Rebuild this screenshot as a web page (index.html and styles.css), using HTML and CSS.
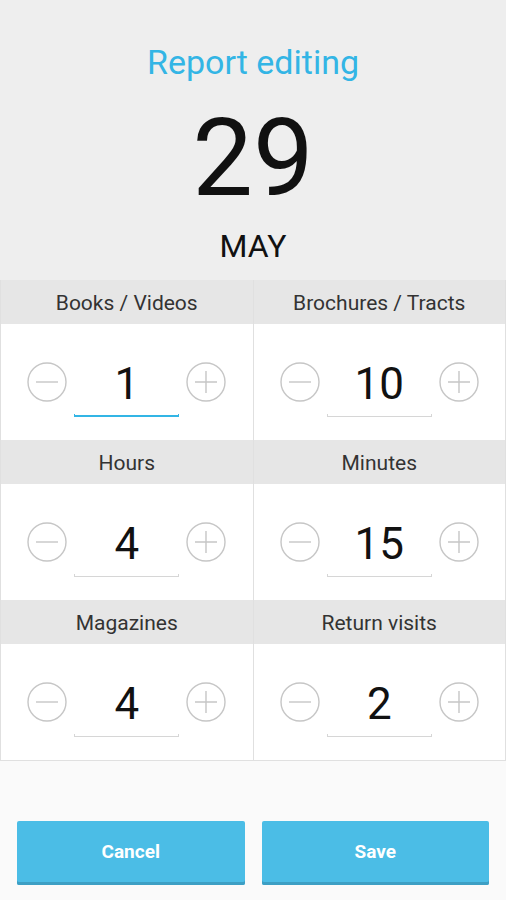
FILE: index.html
```html
<!DOCTYPE html>
<html lang="en">
<head>
    <meta charset="UTF-8">
    <meta name="viewport" content="width=device-width, initial-scale=1.0">
    <title>Report editing</title>
    <link rel="stylesheet" href="styles.css">
</head>
<body>
    <div class="header">
        <div class="title">Report editing</div>
        <div class="day">29</div>
        <div class="month">MAY</div>
    </div>

    <div class="grid">
        <div class="cell">
            <div class="label">Books / Videos</div>
            <div class="counter">
                <button class="round"><svg viewBox="0 0 40 40"><circle cx="20" cy="20" r="19"/><path d="M9 20h22"/></svg></button>
                <div class="field focused"><span class="num">1</span><span class="line"></span></div>
                <button class="round"><svg viewBox="0 0 40 40"><circle cx="20" cy="20" r="19"/><path d="M9 20h22M20 9v22"/></svg></button>
            </div>
        </div>
        <div class="cell">
            <div class="label">Brochures / Tracts</div>
            <div class="counter">
                <button class="round"><svg viewBox="0 0 40 40"><circle cx="20" cy="20" r="19"/><path d="M9 20h22"/></svg></button>
                <div class="field"><span class="num">10</span><span class="line"></span></div>
                <button class="round"><svg viewBox="0 0 40 40"><circle cx="20" cy="20" r="19"/><path d="M9 20h22M20 9v22"/></svg></button>
            </div>
        </div>
        <div class="cell">
            <div class="label">Hours</div>
            <div class="counter">
                <button class="round"><svg viewBox="0 0 40 40"><circle cx="20" cy="20" r="19"/><path d="M9 20h22"/></svg></button>
                <div class="field"><span class="num">4</span><span class="line"></span></div>
                <button class="round"><svg viewBox="0 0 40 40"><circle cx="20" cy="20" r="19"/><path d="M9 20h22M20 9v22"/></svg></button>
            </div>
        </div>
        <div class="cell">
            <div class="label">Minutes</div>
            <div class="counter">
                <button class="round"><svg viewBox="0 0 40 40"><circle cx="20" cy="20" r="19"/><path d="M9 20h22"/></svg></button>
                <div class="field"><span class="num">15</span><span class="line"></span></div>
                <button class="round"><svg viewBox="0 0 40 40"><circle cx="20" cy="20" r="19"/><path d="M9 20h22M20 9v22"/></svg></button>
            </div>
        </div>
        <div class="cell">
            <div class="label">Magazines</div>
            <div class="counter">
                <button class="round"><svg viewBox="0 0 40 40"><circle cx="20" cy="20" r="19"/><path d="M9 20h22"/></svg></button>
                <div class="field"><span class="num">4</span><span class="line"></span></div>
                <button class="round"><svg viewBox="0 0 40 40"><circle cx="20" cy="20" r="19"/><path d="M9 20h22M20 9v22"/></svg></button>
            </div>
        </div>
        <div class="cell">
            <div class="label">Return visits</div>
            <div class="counter">
                <button class="round"><svg viewBox="0 0 40 40"><circle cx="20" cy="20" r="19"/><path d="M9 20h22"/></svg></button>
                <div class="field"><span class="num">2</span><span class="line"></span></div>
                <button class="round"><svg viewBox="0 0 40 40"><circle cx="20" cy="20" r="19"/><path d="M9 20h22M20 9v22"/></svg></button>
            </div>
        </div>
    </div>

    <div class="actions">
        <button class="action">Cancel</button>
        <button class="action">Save</button>
    </div>
</body>
</html>
```

FILE: styles.css
```css
body { margin: 0; width: 506px; height: 900px; background: #fafafa; font-family: Roboto, "Noto Sans", sans-serif; }
.header { height: 280px; box-sizing: border-box; padding-top: 41px; background: #eeeeee; text-align: center; }
.title { font-size: 34px; line-height: 42px; color: #33b5e5; }
.day { margin-top: 21px; font-size: 108px; line-height: 108px; color: #111; }
.month { margin-top: 16px; font-size: 32px; line-height: 36px; color: #111; }

.grid { display: grid; grid-template-columns: 1fr 1fr; column-gap: 1px; background: #e0e0e0; border: 1px solid #e0e0e0; border-top: 0; }
.cell { background: #fff; }
.label { height: 44px; box-sizing: border-box; padding-top: 2px; line-height: 42px; background: #e6e6e6; text-align: center; font-size: 21px; color: #333; }
.counter { height: 116px; display: flex; align-items: center; justify-content: center; gap: 7px; }
.round { width: 40px; height: 40px; padding: 0; border: 0; background: none; }
.round svg { display: block; width: 40px; height: 40px; fill: none; stroke: #c6c6c6; stroke-width: 1.4; }
.field { width: 105px; height: 70px; box-sizing: border-box; padding-top: 11px; display: flex; flex-direction: column; align-items: center; }
.num { font-size: 44px; line-height: 52px; color: #111; }
.line { width: 105px; height: 4px; margin-top: 4px; box-sizing: border-box; border: 1px solid #d6d6d6; border-top: 0; }
.focused .line { border-color: #33b5e5; border-width: 0 1.5px 2px; }

.actions { display: flex; gap: 17px; padding: 60px 17px 0; }
.action { flex: 1; height: 64px; border: 0; border-radius: 2px; background: #4bbde6; box-shadow: inset 0 -3px 0 #3d9fc4; color: #fff; font-family: Roboto, sans-serif; font-size: 19px; font-weight: bold; padding: 0 0 3px; }
```
